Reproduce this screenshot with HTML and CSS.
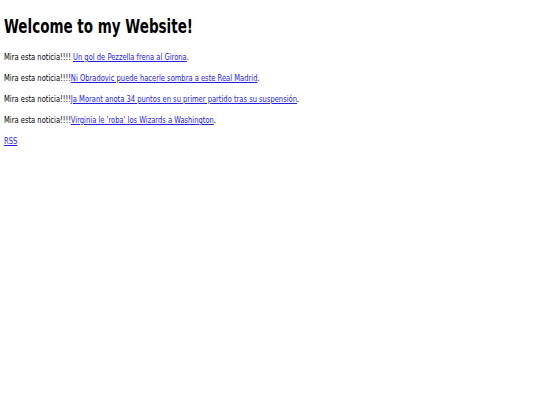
FILE: index.html
```html
<!DOCTYPE html>
<html>
<head>
<meta charset="utf-8">
<link rel="stylesheet" href="styles.css">
</head>
<body>
<div class="page">
<h1 class="title">Welcome to my Website!</h1>
<p class="item">Mira esta noticia!!!! <a href="#">Un gol de Pezzella frena al Girona</a>.</p>
<p class="item">Mira esta noticia!!!!<a href="#">Ni Obradovic puede hacerle sombra a este Real Madrid</a>.</p>
<p class="item">Mira esta noticia!!!!<a href="#">Ja Morant anota 34 puntos en su primer partido tras su suspensión</a>.</p>
<p class="item">Mira esta noticia!!!!<a href="#">Virginia le 'roba' los Wizards a Washington</a>.</p>
<a class="rss" href="#">RSS</a>
</div>
</body>
</html>
```
FILE: styles.css
```css
body {
  margin: 4px;
  font-family: "DejaVu Sans Condensed", "DejaVu Sans", sans-serif;
  font-size: 9.5px;
  color: #000;
  background: #fff;
}
.page {
  transform: scaleX(0.79);
  transform-origin: 0 0;
}
.title {
  font-size: 19px;
  font-weight: bold;
  margin: 11px 0 14px;
  line-height: 22px;
}
.item {
  margin: 0 0 10px;
  line-height: 11px;
}
a {
  color: #2222dd;
}
.rss {
  line-height: 11px;
}
```
